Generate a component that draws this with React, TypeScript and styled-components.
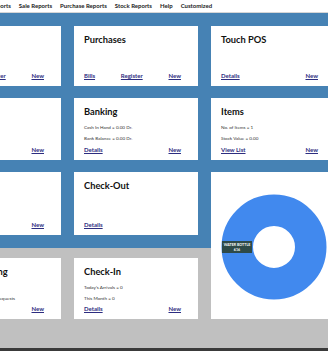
import styled, { createGlobalStyle } from "styled-components";

const Global = createGlobalStyle`
  html, body {
    margin: 0;
    padding: 0;
    background: #ffffff;
    overflow: hidden;
  }
  body {
    font-family: Lato, "Liberation Sans", sans-serif;
  }
`;

const Page = styled.div`
  width: 328px;
  height: 351px;
  display: flex;
  flex-direction: column;
  overflow: hidden;
`;

const MenuBar = styled.nav`
  height: 12px;
  border-bottom: 1px solid #d6d6d6;
  display: flex;
  align-items: center;
  gap: 8px;
  margin-left: -10px;
  font-size: 6px;
  font-weight: 700;
  color: #222;
  white-space: nowrap;
`;

const MenuItem = styled.span`
  line-height: 12px;
`;

const Main = styled.main`
  height: 335px;
  overflow: hidden;
  background: linear-gradient(to bottom, #4682b4 0 235px, #c0c0c0 235px);
`;

const Grid = styled.div`
  display: grid;
  grid-template-columns: 124px 124px 124px;
  grid-template-rows: 60px 62px 63px 72px;
  column-gap: 13px;
  row-gap: 12px;
  padding-top: 13px;
  margin-left: -63px;
  width: 400px;
`;

const Card = styled.section<{ $offset?: number }>`
  background: #ffffff;
  display: flex;
  flex-direction: column;
  padding: 8px 17px 5px 10px;
  margin-top: ${(p) => p.$offset ?? 0}px;
  box-sizing: border-box;
  min-width: 0;
`;

const Title = styled.h3`
  margin: 0;
  font-size: 9.3px;
  line-height: 11px;
  font-weight: 700;
  color: #111;
  white-space: nowrap;
`;

const Lines = styled.div`
  margin-top: 5px;
  display: flex;
  flex-direction: column;
`;

const Line = styled.span`
  font-size: 4.6px;
  line-height: 10.5px;
  color: #333;
  white-space: nowrap;
`;

const Links = styled.div`
  margin-top: auto;
  display: flex;
  justify-content: space-between;
  align-items: center;
  line-height: 10px;
`;

const Link = styled.a`
  font-size: 6px;
  font-weight: 700;
  color: #2d2d80;
  text-decoration: underline;
  cursor: pointer;
`;

const ChartCard = styled.section`
  grid-column: 3;
  grid-row: 3 / 5;
  background: #ffffff;
  display: flex;
  align-items: center;
  justify-content: center;
`;

const BottomBar = styled.div`
  height: 3px;
  background: #3a3a3a;
`;

type CardData = {
  title: string;
  lines?: string[];
  links: string[];
  offset?: number;
};

const cards: CardData[] = [
  { title: "Sales", links: ["Bills", "Register", "New"] },
  { title: "Purchases", links: ["Bills", "Register", "New"] },
  { title: "Touch POS", links: ["Details", "New"] },
  { title: "Expenses", lines: ["Today = 0.00", "This Month = 0.00"], links: ["Details", "New"] },
  {
    title: "Banking",
    lines: ["Cash In Hand = 0.00 Dr.", "Bank Balance = 0.00 Dr."],
    links: ["Details", "New"],
  },
  { title: "Items", lines: ["No. of Items = 1", "Stock Value = 0.00"], links: ["View List", "New"] },
  { title: "Orders", links: ["Details", "New"] },
  { title: "Check-Out", links: ["Details"] },
];

const bottomCards: CardData[] = [
  {
    title: "Room Booking",
    lines: ["Today's Bookings = 0", "Pending Online Booking Requests"],
    links: ["Details", "New"],
    offset: 11,
  },
  {
    title: "Check-In",
    lines: ["Today's Arrivals = 0", "This Month = 0"],
    links: ["Details", "New"],
    offset: 11,
  },
];

const Tile = ({ title, lines, links, offset }: CardData) => (
  <Card $offset={offset}>
    <Title>{title}</Title>
    {lines && (
      <Lines>
        {lines.map((l) => (
          <Line key={l}>{l}</Line>
        ))}
      </Lines>
    )}
    <Links>
      {links.map((l) => (
        <Link key={l}>{l}</Link>
      ))}
    </Links>
  </Card>
);

const Donut = () => (
  <svg width="110" height="110" viewBox="0 0 110 110">
    <circle cx="56" cy="56" r="36.75" fill="none" stroke="#4189ee" strokeWidth="31.5" />
    <rect x="4" y="50" width="30" height="12" fill="#2e4a48" />
    <text x="19" y="55" textAnchor="middle" fontSize="3.6" fontWeight="700" fill="#ffffff" fontFamily="Lato, sans-serif">
      WATER BOTTLE
    </text>
    <text x="19" y="60" textAnchor="middle" fontSize="3.6" fontWeight="700" fill="#ffffff" fontFamily="Lato, sans-serif">
      616
    </text>
  </svg>
);

export default function App() {
  return (
    <Page>
      <Global />
      <MenuBar>
        {["Reports", "Sale Reports", "Purchase Reports", "Stock Reports", "Help", "Customized"].map((m) => (
          <MenuItem key={m}>{m}</MenuItem>
        ))}
      </MenuBar>
      <Main>
        <Grid>
          {cards.map((c) => (
            <Tile key={c.title} {...c} />
          ))}
          <ChartCard>
            <Donut />
          </ChartCard>
          {bottomCards.map((c) => (
            <Tile key={c.title} {...c} />
          ))}
        </Grid>
      </Main>
      <BottomBar />
    </Page>
  );
}
